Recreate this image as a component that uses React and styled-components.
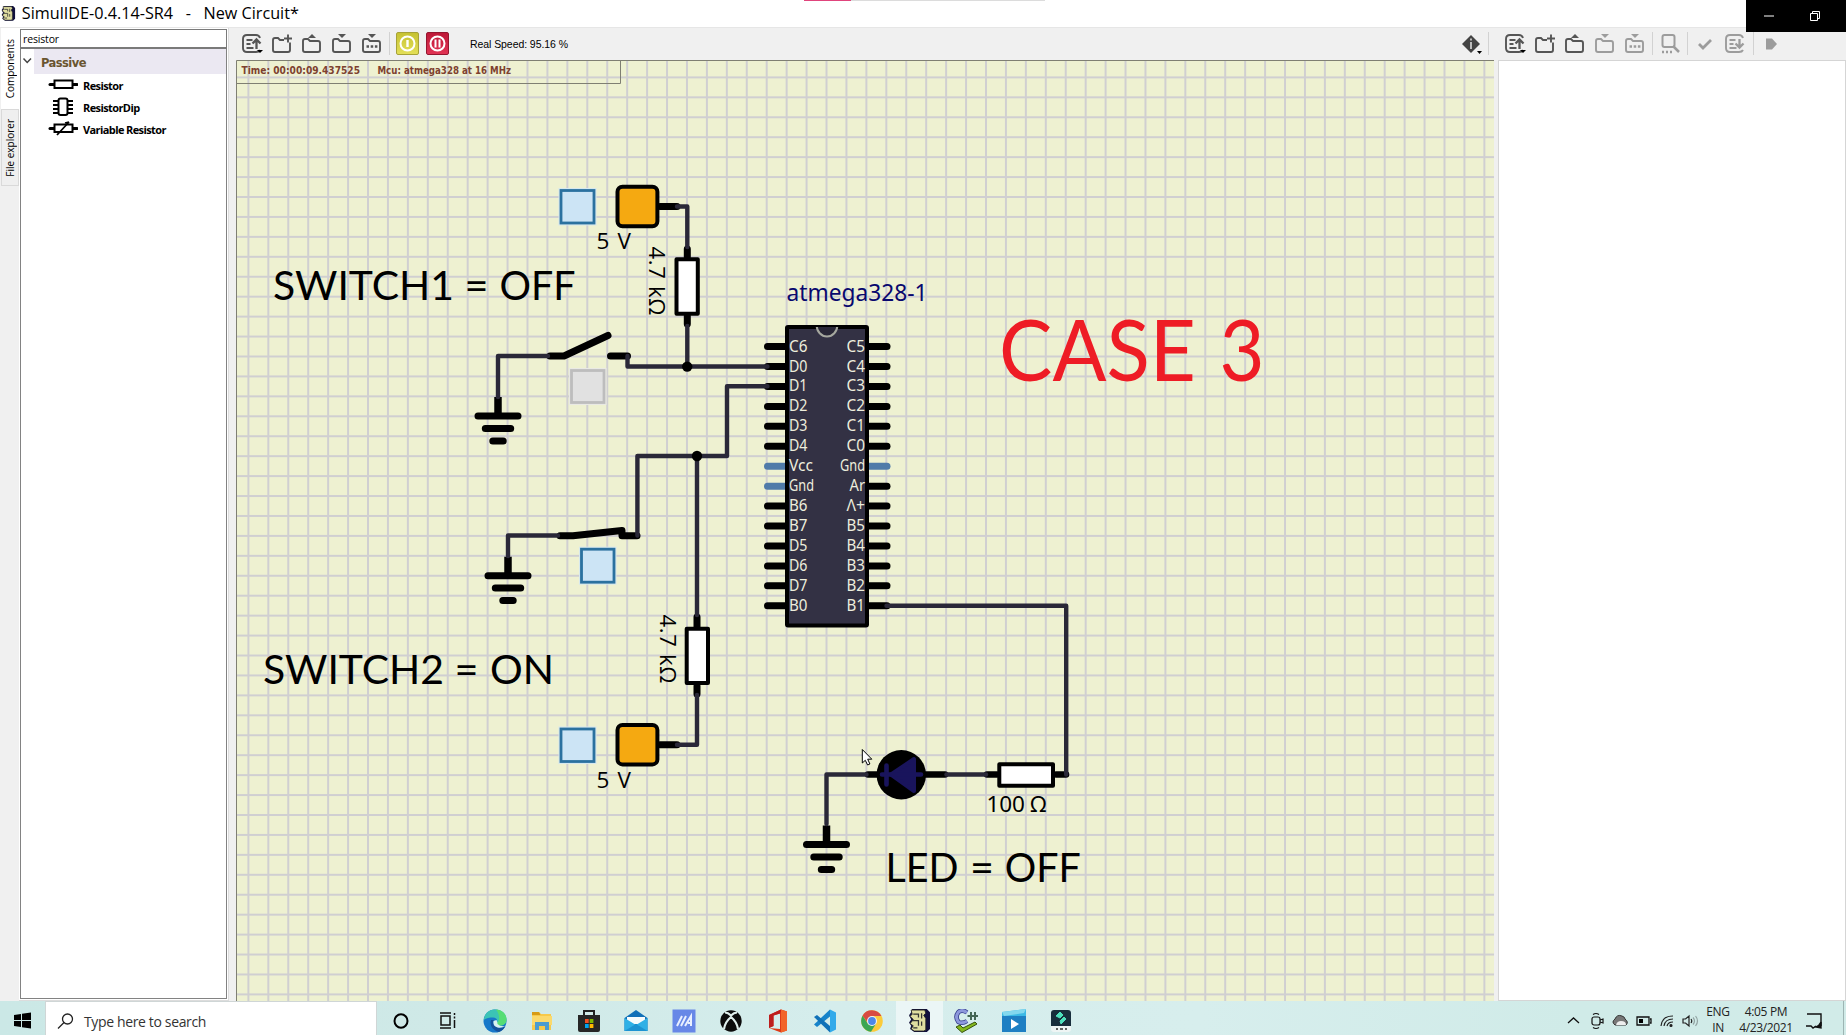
import React from "react";
import styled, { createGlobalStyle } from "styled-components";

const Global = createGlobalStyle`
  *{box-sizing:border-box}
  body{margin:0;background:#f0f0f0;overflow:hidden;font-family:"Open Sans","Noto Sans",sans-serif;color:#000}
  svg{display:block;flex:none}
`;
const Screen = styled.div`width:1846px;height:1035px;display:flex;flex-direction:column;position:relative;overflow:hidden;background:#f0f0f0;`;
const TitleBar = styled.header`height:27px;flex:none;background:#fff;display:flex;align-items:center;padding-left:1px;gap:6px;`;
const Title = styled.h1`margin:0;font-size:16.2px;font-weight:400;line-height:27px;white-space:pre;`;
const RecordMark = styled.div`position:absolute;left:804px;top:0;width:241px;height:1px;background:#dcdcdc;border-left:47px solid #e0447c;`;
const WindowControls = styled.div`position:absolute;right:0;top:0;width:100px;height:32px;background:#000;display:flex;align-items:center;padding:0 26px 0 18px;justify-content:space-between;`;
const Main = styled.main`display:flex;height:974px;flex:none;border-top:1px solid #e6e6e6;`;
const Tabs = styled.nav`width:19px;display:flex;flex-direction:column;padding-left:1px;`;
const Tab = styled.div`height:${p => p.$h}px;display:flex;align-items:center;justify-content:center;background:${p => p.$on ? "#fff" : "#efefef"};border:1px solid ${p => p.$on ? "#fff" : "#d9d9d9"};
  span{writing-mode:vertical-rl;transform:rotate(180deg);font-size:10px;line-height:14px;white-space:nowrap;letter-spacing:${p => p.$ls}px;}`;
const Side = styled.aside`width:210px;padding:1px 1px 1px 1px;display:flex;flex-direction:column;background:#fff;border-right:1px solid #dcdcdc;border-bottom:1px solid #dcdcdc;`;
const Filter = styled.div`height:20px;border:1px solid #7a7a7a;border-bottom-width:2px;background:#fff;font-size:10.5px;line-height:19px;padding-left:2px;letter-spacing:-.15px;`;
const Tree = styled.div`flex:1;border:1px solid #828282;border-top:0;background:#fff;`;
const Group = styled.div`height:25px;display:flex;align-items:center;
  svg{margin:0 2px 2px 1px}
  b{flex:1;height:25px;line-height:29px;padding-left:7px;background:#ebe8f2;color:#6a5530;font-size:11.5px;font-family:"DejaVu Sans";letter-spacing:-.55px}`;
const Item = styled.div`height:22px;display:flex;align-items:center;padding-left:27px;gap:5px;font-size:11px;font-weight:700;letter-spacing:${p => p.$ls}px;`;
const Center = styled.section`width:1258px;margin-left:7px;display:flex;flex-direction:column;`;
const Right = styled.section`width:348px;margin-left:4px;display:flex;flex-direction:column;`;
const Toolbar = styled.div`height:32px;flex:none;display:flex;align-items:center;padding-left:${p => p.$pad}px;padding-bottom:1px;`;
const Btn = styled.div`width:${p => p.$w || 30}px;height:30px;display:flex;align-items:center;justify-content:center;color:${p => p.$off ? "#9c9c9c" : "#555"};`;
const Sep = styled.i`width:1px;height:23px;background:#d2d2d2;margin:0 ${p => p.$r || 2}px 0 ${p => p.$l || 2}px;`;
const Power = styled.div`width:23px;height:23px;margin-right:7px;border-radius:2px;border:1px solid ${p => p.$edge};background:${p => p.$bg};display:flex;align-items:center;justify-content:center;`;
const Speed = styled.div`margin-left:14px;font-family:"Liberation Sans",sans-serif;font-size:10.5px;white-space:pre;letter-spacing:-.07px;`;
const Fill = styled.div`flex:1;`;
const Panel = styled.div`flex:1;background:#fff;border:1px solid #d5d5d5;`;
const Taskbar = styled.footer`height:34px;flex:none;display:flex;background:linear-gradient(90deg,#cbe8e6 0,#cfe9e7 25%,#d5edec 45%,#d7eeed 65%,#d0ebe8 85%,#d1ebe8 100%);`;
const Start = styled.div`width:45px;display:flex;align-items:center;justify-content:center;padding-top:4px;`;
const Search = styled.div`width:332px;background:#fff;border:1px solid #cfd6d6;border-bottom:0;display:flex;align-items:center;padding:5px 0 0 11px;gap:10px;font-size:14px;color:#333;white-space:nowrap;span{letter-spacing:-.36px}`;
const TaskItem = styled.div`width:47.17px;display:flex;align-items:center;justify-content:center;background:${p => p.$on ? "#ebf6f6" : "none"};padding-top:5px;`;
const Apps = styled.div`display:flex;width:712px;`;
const Tray = styled.div`margin-left:auto;display:flex;width:282px;align-items:center;gap:8px;padding-top:5px;`;
const TrayText = styled.div`width:${p => p.$w}px;text-align:center;font-size:12px;line-height:16.5px;color:#222;letter-spacing:-.35px;margin:-1px ${p => p.$r || 0}px 0 ${p => p.$l || 0}px;white-space:nowrap;`;
const Edge = styled.i`width:1px;height:34px;background:#9db5b3;margin:-5px 2px 0 auto;`;
const Schematic = styled.svg`flex:1;`;
const Label = styled.text`font-family:${p => p.$f || '"Open Sans","Noto Sans",sans-serif'};font-size:${p => p.$s}px;font-weight:${p => p.$b ? 700 : 400};fill:${p => p.$c || "#000"};white-space:pre;`;

const Chip = ({ s = 22 }) => (
  <svg width={s * .72} height={s * .72} viewBox="0 0 22 22">
    <path d="M4 0h14l3 3v16l-3 3H6l-4-3 1-3-2-3 2-3-2-4 2-3z" fill="#11103c" />
    <path d="M3 1h13l1 3-2 2 2 3v11l-2 1H6l-3-2 2-3-3-2 3-4-3-3 2-2z" fill="#dfdda0" stroke="#222" strokeWidth=".8" />
    <path d="M5 5h5v3m-6 3h6v5m3-12v5m-8 9h4m4-6v4" fill="none" stroke="#333" strokeWidth="1.2" />
  </svg>
);
const Caret = () => <path d="M16 17h6l-3 3z" fill="#000" stroke="none" />;
const Ico = ({ children }) => <svg width="22" height="22" viewBox="0 0 22 22" fill="none" stroke="currentColor" strokeWidth="1.9">{children}</svg>;
const DocIcon = ({ down }) => (
  <Ico>
    <path d="M19 5Q18 2 15 2H6Q2 2 2 6v9q0 4 4 4h9q3 0 4-2" />
    <path d="M5.500 7h6M5.500 11h4M5.500 15h7" strokeWidth="2" />
    {down ? <path d="M15.500 6v8m-4-3.500 4 4 4-4" strokeWidth="2.300" /> : <path d="M15.500 16V7m-4 3.500 4-4 4 4" strokeWidth="2.300" />}
    {!down && <Caret />}
  </Ico>
);
const Folder = ({ kind }) => (
  <Ico>
    <path d={kind === "new" ? "M13 7h-4L7 5H4Q2 5 2 7v10q0 2 2 2h13q2 0 2-2V9.500" : "M4 6h3l2 2h8q2 0 2 2v7q0 2-2 2H4q-2 0-2-2V8q0-2 2-2z"} />
    {kind === "new" && <path d="M17 1.500v8M13 5.500h8" />}
    {kind === "open" && <path d="M7 5l4-4 4 4z" fill="currentColor" stroke="none" />}
    {(kind === "save" || kind === "saveas") && <path d="M7 1h8l-4 4z" fill="currentColor" stroke="none" />}
    {kind === "saveas" && <path d="M5.500 13.500h2.500m1.700 0h2.500m1.700 0h2.500" strokeWidth="2.400" />}
  </Ico>
);

const INK = "#000", WIRE = "#2a2838";
const Wire = ({ d }) => <path d={d} fill="none" stroke={WIRE} strokeWidth="4.4" strokeLinecap="round" strokeLinejoin="round" />;
const Pin = ({ d, c = INK, w = 7 }) => <path d={d} fill="none" stroke={c} strokeWidth={w} strokeLinecap="round" strokeLinejoin="round" />;
const Ground = ({ x, y }) => <>
  <path d={`M${x} ${y - 19}V${y}`} stroke="#000" strokeWidth="7.500" />
  <Pin d={`M${x - 20} ${y}H${x + 20}M${x - 12.700} ${y + 12.400}H${x + 12.700}M${x - 5.200} ${y + 24.900}H${x + 5.200}`} />
</>;
const Toggle = ({ x, y, off, w = 36, h = 36 }) => <>
  <rect x={x - 1} y={y - 1} width={w + 2} height={h + 2} fill={off ? "#e9e9e4" : "#d6e8ee"} />
  <rect x={x + 1.500} y={y + 1.500} width={w - 3} height={h - 3} fill={off ? "#e1e1e1" : "#cce4f5"} stroke={off ? "#bdbdbd" : "#2b719f"} strokeWidth="2.800" />
</>;
const Source = ({ y }) => <>
  <Pin d={`M660 ${y}h17`} />
  <rect x="617.500" y={y - 19.700} width="39.900" height="39.400" rx="5" fill="#f5a911" stroke="#000" strokeWidth="4" />
</>;
const Box = ({ x, y, w, h }) => <rect x={x} y={y} width={w} height={h} fill="#fff" stroke="#000" strokeWidth="4" strokeLinejoin="round" />;
const Words = ({ y, s, c, parts }) => (
  <Label y={y} $s={s} $f="Lato,sans-serif" $c={c}>
    {parts.map(([t, x, w]) => <tspan key={t} x={x} textLength={w} lengthAdjust="spacingAndGlyphs">{t}</tspan>)}
  </Label>
);
const leftPins = ["C6", "D0", "D1", "D2", "D3", "D4", "Vcc", "Gnd", "B6", "B7", "D5", "D6", "D7", "B0"];
const rightPins = ["C5", "C4", "C3", "C2", "C1", "C0", "Gnd", "Ar", "Λ+", "B5", "B4", "B3", "B2", "B1"];
const TAH = '"Noto Sans","Open Sans",sans-serif';
const widthOf = t => t === "Gnd" ? 25 : t === "Vcc" ? 24 : t === "Ar" ? 15.500 : 18.500;
const STEP = 19.935;

function Circuit() {
  return (
    <Schematic width="1258" height="941" viewBox="236 60 1258 941">
      <defs>
        <pattern id="grid" x="247.400" y="76.400" width={STEP} height={STEP} patternUnits="userSpaceOnUse">
          <path d={`M1 0V${STEP}M0 1H${STEP}`} stroke="#d0cfd1" strokeWidth="2" />
        </pattern>
      </defs>
      <rect x="236" y="60" width="1258" height="941" fill="#eef1d1" />
      <rect x="236" y="60" width="1258" height="941" fill="url(#grid)" />
      <path d="M236.500 1001V60.500H1494M236 83.500H620.500V60" fill="none" stroke="#7f7f72" />
      <Label x="241.500" y="74.400" $s={10} $b $f='"DejaVu Sans",sans-serif' $c="#7d412f" textLength="118.500" lengthAdjust="spacingAndGlyphs">Time: 00:00:09.437525</Label>
      <Label x="377.500" y="74.400" $s={10} $b $f='"DejaVu Sans",sans-serif' $c="#7d412f" textLength="133.500" lengthAdjust="spacingAndGlyphs">Mcu: atmega328 at 16 MHz</Label>

      <Source y={206.500} />
      <Pin d="M687.300 249V257M687.300 316v8" />
      <Box x={676.500} y={259.300} w={21.300} h={54.500} />
      <Toggle x={559.500} y={189} h={35.500} />
      <Pin d="M550 356H564L608 335.500M610.500 356H627.500" />
      <Toggle x={570} y={369} off w={35.500} h={35} />
      <Ground x={498} y={416} />
      <Pin d="M560 535.700H573L622 530.500V535.700H637" />
      <Toggle x={580} y={547.700} w={35.500} />
      <Ground x={508} y={575.700} />
      <Pin d="M697 617V627M697 686v8" />
      <Box x={686.700} y={628.700} w={21.300} h={54.300} />
      <Source y={744.700} />
      <Toggle x={559.500} y={727.500} h={35.500} />

      {leftPins.map((t, i) => <Pin key={i} c={t === "Vcc" || t === "Gnd" ? "#507ba9" : INK} d={`M767.500 ${346.600 + i * STEP}H785`} />)}
      {rightPins.map((t, i) => <Pin key={i} c={t === "Gnd" ? "#507ba9" : INK} d={`M869 ${346.600 + i * STEP}H887`} />)}
      <rect x="787" y="327" width="80" height="298.500" rx="1" fill="#333144" stroke="#000" strokeWidth="4" />
      <path d="M816.700 325.500a10.300 11 0 0 0 20.600 0" fill="#292737" stroke="#a6a89f" strokeWidth="2" />
      <path d="M815 326h24" stroke="#000" strokeWidth="2" />
      {leftPins.map((t, i) => <Label key={i} x="789" y={351.600 + i * STEP} $s={15.500} $f={TAH} $c="#eeeedd" textLength={widthOf(t)} lengthAdjust="spacingAndGlyphs">{t}</Label>)}
      {rightPins.map((t, i) => <Label key={i} x={865 - widthOf(t)} y={351.600 + i * STEP} $s={15.500} $f={TAH} $c="#eeeedd" textLength={widthOf(t)} lengthAdjust="spacingAndGlyphs">{t}</Label>)}

      <Pin d="M868 774.500H945M987 774.500H997M1056 774.500H1066" w={6.600} />
      <circle cx="901.300" cy="774.700" r="24.700" />
      <path d="M891 774.500 914 759V791Z" fill="#19145c" stroke="#19145c" strokeWidth="4" strokeLinejoin="round" />
      <Pin d="M886.500 765.500V784.500M882 774.500H921" c="#19145c" w={4.600} />
      <Box x={999.300} y={764.300} w={53.700} h={21.400} />
      <Ground x={826.500} y={844.500} />

      <Wire d="M677 206.500H687.300V247" />
      <Wire d="M687.300 326V366.500" />
      <Wire d="M627.500 356V366.500H767.500" />
      <Wire d="M548 356H498V397" />
      <Wire d="M767.500 386.300H727V456H637.400V535.500" />
      <Wire d="M697 456V615" />
      <Wire d="M697 695V744.700H677" />
      <Wire d="M558 535.500H508V556" />
      <Wire d="M886.500 605.700H1066.200V774.500" />
      <Wire d="M946.500 774.500H986" />
      <Wire d="M866.500 774.500H826.500V824" />
      <circle cx="687.200" cy="366.600" r="5.200" /><circle cx="697" cy="456" r="5.200" />

      <Label x="596.500" y="248.800" $s={22.500} textLength="34.500">5 V</Label>
      <Label x="596.500" y="787.900" $s={22.500} textLength="34.500">5 V</Label>
      <Label transform="translate(649.300 246.500) rotate(90)" $s={22} textLength="69">4.7 kΩ</Label>
      <Label transform="translate(660.200 614.500) rotate(90)" $s={22} textLength="69">4.7 kΩ</Label>
      <Label x="986.500" y="811.700" $s={22.500} $f={TAH} textLength="60">100 Ω</Label>
      <Label x="786.500" y="300.600" $s={23} $f={TAH} $c="#08086e" textLength="141" lengthAdjust="spacingAndGlyphs">atmega328-1</Label>
      <Words y="299.500" s={41} parts={[["SWITCH1", 273, 181], ["=", 464.500, 24], ["OFF", 499.500, 76]]} />
      <Words y="684.300" s={41} parts={[["SWITCH2", 263, 181], ["=", 454.500, 24], ["ON", 490, 64]]} />
      <Words y="881.500" s={41} parts={[["LED", 885.500, 73], ["=", 970, 24], ["OFF", 1004.800, 76]]} />
      <Words y="380.700" s={84.500} c="#ee1c25" parts={[["CASE", 999, 197], ["3", 1219.500, 45]]} />
      <path d="M862.300 749.500V763l3-2.700 2.300 4.700 2.300-1-2.200-4.800h4.100z" fill="#fff" stroke="#000" />
    </Schematic>
  );
}

const PartIcon = ({ kind }) => (
  <svg width="30" height="22" viewBox="0 0 30 22" fill="none" stroke="#000">
    {kind === "dip" ? <>
      <path d="M5 5h20M5 9h20M5 13h20M5 17h20" strokeWidth="2" />
      <rect x="10.500" y="2.500" width="9" height="16.500" rx="2" fill="#fff" strokeWidth="2" />
    </> : <>
      <path d="M2 10.500h27" strokeWidth="3" strokeLinecap="round" />
      <rect x="6.500" y="6.500" width="18" height="7.500" fill="#fff" strokeWidth="2" />
      {kind === "var" && <path d="M9 17 21 4m0 0-4 1" strokeWidth="1.800" />}
    </>}
  </svg>
);

const AppIcon = ({ k }) => {
  const c = {
    cortana: <ellipse cx="12" cy="12" rx="6.500" ry="6.700" fill="none" stroke="#000" strokeWidth="2" />,
    view: <path d="M5 7h9v9H5zM4 4h11M4 19h11M18.500 4v2m0 5v8M18.500 7.500v2" fill="none" stroke="#111" strokeWidth="1.500" />,
    edge: <>
      <circle cx="12" cy="12" r="11.500" fill="#1678c9" />
      <path d="M.7 11C2 3 7 .5 12 .5c7 0 11.500 5 11.500 10 0 4-3 6-6.500 6-3 0-3.500-1.500-3-3 1-3-1-5-4-5S3 9 .7 11z" fill="#3bc4b5" />
      <path d="M13 .6c7 .4 10.500 5 10.500 9.900 0 4-3 6-6.500 6-3 0-3.500-1.500-3-3 3-1 3-8-1-12.900z" fill="#55dd74" />
      <path d="M8 11c-2 6 3 11 8 12 3-1 5-3 6.500-6-4 2.500-10 2-12-2-.7-2-.2-3 .5-4z" fill="#13519c" />
      <path d="M10.500 12q-1 5 4 6.500 4 1 8-1.500-5 1-8-2 0-2-1-4z" fill="#d8f0f0" />
    </>,
    folder: <><path d="M2 3h7l2 2h10v16H2z" fill="#f7c94a" /><path d="M2 3h7l1.500 3H2z" fill="#d79b16" /><path d="M2 7h20v9H2z" fill="#fbd96c" /><path d="M5 21v-8h14v8h-4v-4H9v4z" fill="#4a9bd0" /></>,
    store: <><path d="M7 7V2h10v5" fill="none" stroke="#222" strokeWidth="2" /><path d="M1 6h22v15q0 2-2 2H3q-2 0-2-2z" fill="#262626" /><path d="M8 10h3.700v4H8z" fill="#f25022" /><path d="M12.700 10h3.700v4h-3.700z" fill="#7fba00" /><path d="M8 15h3.700v4H8z" fill="#00a4ef" /><path d="M12.700 15h3.700v4h-3.700z" fill="#ffb900" /></>,
    mail: <><path d="M.5 9 12 1l11.500 8v13H.5z" fill="#1170b8" /><path d="M3 8h18v7H3z" fill="#f7fbfc" /><path d="m.5 9 11.500 7L23.500 9v13H.5z" fill="#2fb0e6" /><path d="m.5 22 11.500-7 11.500 7z" fill="#1d93d2" /></>,
    m: <><path d="M.5.5h23v23H.5z" fill="#6787e7" /><path d="m5 17 5-10m-1 10 5-10m-1 10 6-10v10m-3-3h3" fill="none" stroke="#e9efff" strokeWidth="2" /></>,
    xbox: <><circle cx="12" cy="12" r="10.700" fill="#0c0c0c" /><path d="M6 3.500q3 0 6 3 3-3 6-3M12 8q-6 5-7 12M12 8q6 5 7 12" fill="none" stroke="#e0efed" strokeWidth="2.200" /></>,
    office: <><path d="m3 6 12-5.500 6 2v19l-6 2L3 19l11 1V4.500L7.500 6.500V17L3 19z" fill="#df3a17" /><path d="m15 .5 6 2v19l-6 2z" fill="#f2642a" /><path d="m3 6 12-5.500L14 4.500l-6.500 2V17L3 19z" fill="#bd1d1d" /></>,
    code: <><path d="m17 .5 6 3v17l-6 3z" fill="#32aaea" /><path d="M17 .5v7L4 18l-3-2.500z" fill="#1683ca" /><path d="m1 8 3-2 13 11v6.500z" fill="#1071b8" /></>,
    chrome: <><circle cx="12" cy="12" r="10.800" fill="#fbcb3a" /><path d="M2.500 6.700A10.800 10.800 0 0 1 21.400 7H12l-4 7z" fill="#d84b42" /><path d="M2.500 6.700A10.800 10.800 0 0 0 11 22.700l5-8-8 0z" fill="#3aa653" /><circle cx="12" cy="12" r="5" fill="#f3f3f3" /><circle cx="12" cy="12" r="3.900" fill="#4c87e8" /></>,
    cpp: <><path d="M13 3.500Q8 0 4.500 3q-4 5 0 10 4 2 8.500-1" fill="none" stroke="#30398a" strokeWidth="4.500" /><path d="M13 3.500Q8 0 4.500 3q-4 5 0 10 4 2 8.500-1" fill="none" stroke="#8d98dc" strokeWidth="3" /><path d="M17 3v8m-3.500-4H24m-3-4v8" stroke="#465" strokeWidth="2" /><path d="m2 18 4-2 3 3 12-6 2 2L8 23.500z" fill="#83b81d" stroke="#35510d" /></>,
    movie: <><path d="m0 3 24-3v7H0z" fill="#3cb9e5" /><path d="M0 3 24 0l-2 4L2 7z" fill="#83d8ee" /><path d="M0 7h24v16H0z" fill="#1e7fc3" /><path d="m9 10 8 5-8 5z" fill="#fff" /></>,
    film: <><rect x="2" y="1" width="20" height="22" rx="3" fill="#eef5f4" /><path d="M2 4q0-3 3-3h14q3 0 3 3v13H2z" fill="#182e3c" /><path d="m7 7 4-4 3 3-3 3zm4 5 4-4 2 2-5 5z" fill="#4ee0bd" stroke="#4ee0bd" /><path d="M7 20h2m2 0h3m2 0h2" stroke="#333" strokeWidth="1.500" /></>,
  }[k];
  return <svg width="24" height="24" viewBox="0 0 24 24">{c}</svg>;
};

export default function App() {
  return (
    <Screen>
      <Global />
      <TitleBar><Chip s={20.500} /><Title>SimulIDE-0.4.14-SR4   -   New Circuit*</Title></TitleBar>
      <Main>
        <Tabs>
          <Tab $on $h={81} $ls={-.08}><span>Components</span></Tab>
          <Tab $h={77} $ls={0}><span>File explorer</span></Tab>
        </Tabs>
        <Side>
          <Filter>resistor</Filter>
          <Tree>
            <Group><svg width="10" height="8" viewBox="0 0 10 8"><path d="m1.500 1.500 3.700 4L9 1.500" fill="none" stroke="#444" strokeWidth="1.500" /></svg><b>Passive</b></Group>
            <Item $ls={-.6}><PartIcon />Resistor</Item>
            <Item $ls={-.6}><PartIcon kind="dip" />ResistorDip</Item>
            <Item $ls={-.6}><PartIcon kind="var" />Variable Resistor</Item>
          </Tree>
        </Side>
        <Center>
          <Toolbar $pad={1}>
            <Btn><DocIcon /></Btn>
            {["new", "open", "save", "saveas"].map(k => <Btn key={k}><Folder kind={k} /></Btn>)}
            <Sep $r={6} $l={2} />
            <Power $edge="#a6a238" $bg="linear-gradient(#c6c233,#e3df58)"><svg width="19" height="19" fill="none" stroke="#fff"><circle cx="9.500" cy="9.500" r="7" strokeWidth="2" /><path d="M9.500 6v7" strokeWidth="2.400" /></svg></Power>
            <Power $edge="#94162f" $bg="linear-gradient(#bd1837,#e13354)"><svg width="19" height="19" fill="none" stroke="#fff"><circle cx="9.500" cy="9.500" r="7" strokeWidth="2" /><path d="M7.500 5.500v8M11.500 5.500v8" strokeWidth="2" /></svg></Power>
            <Speed>Real Speed: 95.16 %</Speed>
            <Fill />
            <Btn><Ico><path d="m11 2 9 9-9 9-9-9z" fill="#444" stroke="none" /><path d="M11 9v7M11 5.500v2" stroke="#fff" strokeWidth="1.300" /><path d="M17 18h5l-2.500 3z" fill="#000" stroke="none" /></Ico></Btn>
            <Sep $r={5} $l={2} />
          </Toolbar>
          <Circuit />
        </Center>
        <Right>
          <Toolbar $pad={1}>
            <Btn $w={31}><DocIcon /></Btn>
            <Btn><Folder kind="new" /></Btn><Btn><Folder kind="open" /></Btn>
            <Btn $off><Folder kind="save" /></Btn><Btn $off><Folder kind="saveas" /></Btn>
            <Sep />
            <Btn $off><Ico><rect x="3.500" y="2" width="12" height="12" rx="2" strokeWidth="2" /><path d="m14 13 6 6" strokeWidth="2.500" /><path d="M3 19h2m2 0h2m2 0h2" strokeWidth="2.500" /></Ico></Btn>
            <Sep />
            <Btn $off><Ico><path d="m5 11 4 4 8-8" strokeWidth="2.800" /></Ico></Btn>
            <Btn $off><DocIcon down /></Btn>
            <Sep $l={3} />
            <Btn $off><Ico><path d="M6 5.500h6l5 5.500-5 5.500H6z" fill="currentColor" stroke="none" /></Ico></Btn>
          </Toolbar>
          <Panel />
        </Right>
      </Main>
      <Taskbar>
        <Start><svg width="17" height="17" viewBox="0 0 17 17"><path d="M0 3l7-1v6H0zM8 1.800 17 .5V8H8zM0 9h7v6l-7-1zM8 9h9v7.500L8 15.200z" /></svg></Start>
        <Search><svg width="17" height="17" viewBox="0 0 17 17" fill="none" stroke="#222" strokeWidth="1.300"><circle cx="10.500" cy="6" r="5" /><path d="m7 9.500-6 6" /></svg><span>Type here to search</span></Search>
        <Apps>
          {["cortana", "view", "edge", "folder", "store", "mail", "m", "xbox", "office", "code", "chrome"].map(k => <TaskItem key={k}><AppIcon k={k} /></TaskItem>)}
          <TaskItem $on><Chip s={32} /></TaskItem>
          <TaskItem><AppIcon k="cpp" /></TaskItem><TaskItem><AppIcon k="movie" /></TaskItem><TaskItem><AppIcon k="film" /></TaskItem>
        </Apps>
        <Tray>
          <svg width="18" height="16" viewBox="0 0 18 16" fill="none" stroke="#111" strokeWidth="1.300"><path d="m4 10 5.500-5 5.500 5" /></svg>
          <svg width="14" height="18" viewBox="0 0 14 18" fill="none" stroke="#111" strokeWidth="1.200"><rect x="2" y="5" width="8" height="8" rx="2" /><path d="m10 8 3-1v4l-3-1M3 2.500q3-2 6 0M3 15.500q3 2 6 0" /></svg>
          <svg width="16" height="13" viewBox="0 0 16 13"><path d="M3 11q-4-3 0-6 2-5 7-3 3 1 3 3 4 3 1 6z" fill="#777" stroke="#333" /><path d="M4 11q1-4 5-4 5 0 5 4z" fill="#eee" /></svg>
          <svg width="16" height="12" viewBox="0 0 16 12"><path d="M1 2h12v8H1zM14 4h1v4h-1" fill="none" stroke="#111" strokeWidth="1.300" /><path d="M3 4h4v4H3z" /></svg>
          <svg width="14" height="14" viewBox="0 0 14 14" fill="none" stroke="#222" strokeWidth="1.200"><path d="M1 12Q2 2 13 2M4 12q1-7 9-7M7 12q1-4 6-4" /><circle cx="11" cy="11.500" r="1" fill="#111" /></svg>
          <svg width="17" height="14" viewBox="0 0 17 14" fill="none" stroke="#222" strokeWidth="1.200"><path d="M1 5h2.500L7 2v10L3.500 9H1zM9 5q1.500 2 0 4" /><path d="M11 3.500q3 3.500 0 7M13.500 2q4 5 0 10" stroke="#92a4a3" /></svg>
          <TrayText $w={26} $l={-2}>ENG<br />IN</TrayText>
          <TrayText $w={54} $r={3}>4:05 PM<br />4/23/2021</TrayText>
          <svg width="19" height="18" viewBox="0 0 19 18" fill="none" stroke="#111" strokeWidth="1.400"><path d="M3 2h14v12M2 14h5l2 2 3-2" /><path d="M12 15q3-1 5-5v6z" fill="#111" /></svg>
          <Edge />
        </Tray>
      </Taskbar>
      <RecordMark />
      <WindowControls>
        <svg width="10" height="2"><path d="M0 1h10" stroke="#fff" /></svg>
        <svg width="10" height="10" viewBox="0 0 10 10" fill="none" stroke="#fff"><path d="M.5 2.500h7v7h-7zM2.500 2V.5h7v7H8" /></svg>
      </WindowControls>
    </Screen>
  );
}
